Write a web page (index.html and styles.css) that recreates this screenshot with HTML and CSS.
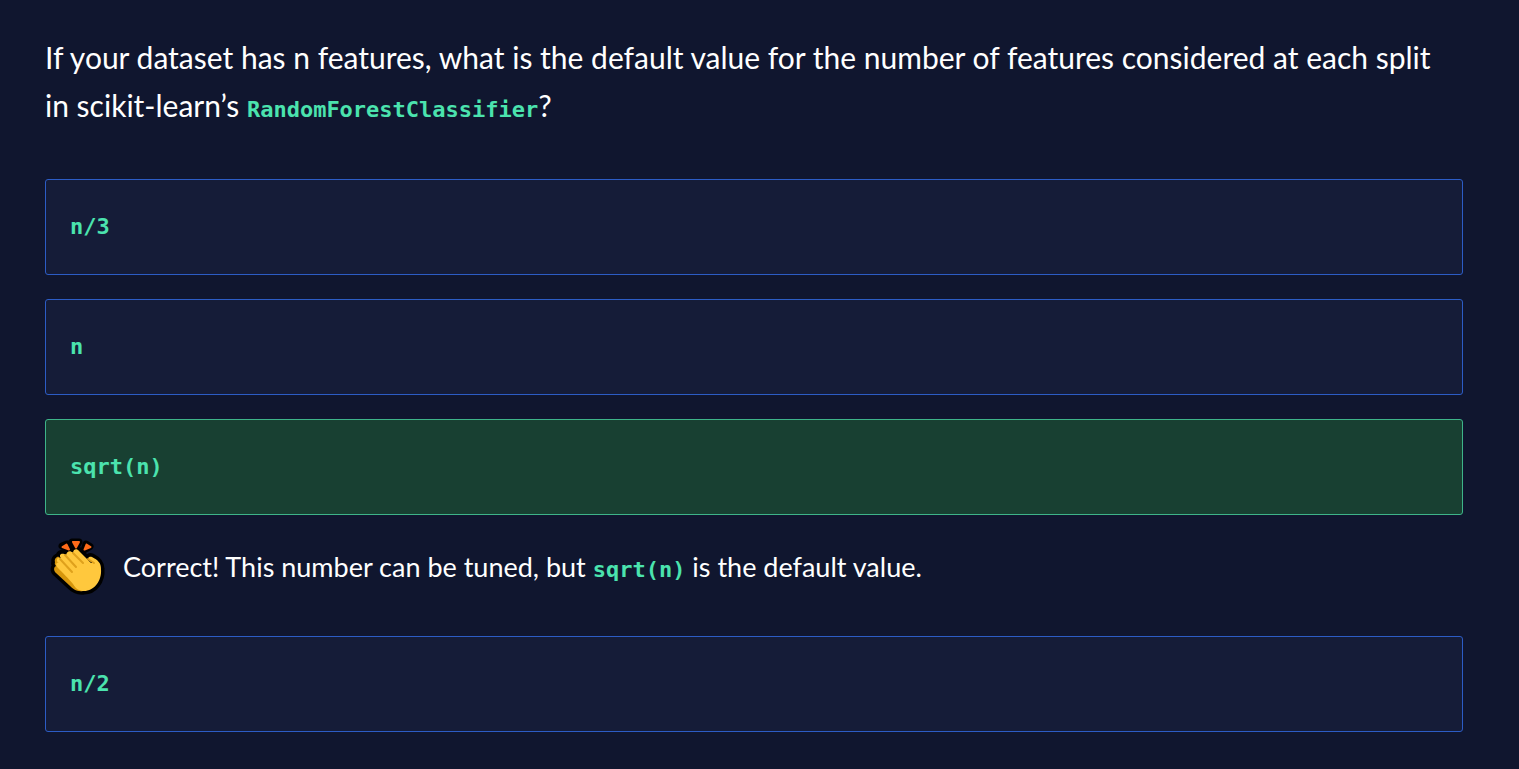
FILE: index.html
```html
<!DOCTYPE html>
<html lang="en">
<head>
<meta charset="utf-8">
<meta name="viewport" content="width=device-width, initial-scale=1">
<title>Random Forest Quiz</title>
<link rel="stylesheet" href="styles.css">
</head>
<body>
<main class="quiz">
  <h1 class="question">If your dataset has n features, what is the default value for the number of features considered at each split in scikit-learn’s <code class="code">RandomForestClassifier</code>?</h1>
  <div class="answers">
    <button class="answer" type="button"><code class="code">n/3</code></button>
    <button class="answer" type="button"><code class="code">n</code></button>
    <button class="answer answer-correct" type="button"><code class="code">sqrt(n)</code></button>
    <div class="feedback">
      <svg class="clap" viewBox="0 0 64 68" aria-hidden="true">
        <g class="clap-outline">
          <path d="M17 14 22 12 24 17ZM27 10H34L31 15ZM41 12 45 14.500 39 18Z"/>
          <path d="M10 30C9 27 12 24 14 25C14 21 18 20 21 23C22 19 25 19 28 20C29 16 33 17 34 19L43 28C42 25 45 24 47 25C53 28 56 31 56 37C57 49 49 59 39 59C32 60 28 57 24 53L11 41C8 38 9 35 11 34Q9 32 10 30Z"/>
        </g>
        <path class="clap-spark" d="M17.500 15 21.500 12.500 24 17.500ZM28 10H34L31 15.500ZM41.500 12.500 45.500 15 39.500 17.500Z"/>
        <path class="clap-back" d="M10 30C9 27 12 24 14 25L38 59C32 60 28 57 24 53L11 41C8 38 9 35 11 34Q9 32 10 30Z"/>
        <path class="clap-hand" d="M12 29C11 26 14 25 16 26C13 23 17 20 21 23C22 19 25 18 28 21C28 17 32 16 34 19L46 31L48 31L44 28C42 25 45 24 47 25C53 28 56 31 56 37C57 49 49 59 39 59C34 59 31 57 28 52C24 47 17 40 13 36C10 33 11 30 14 31Q12 30 12 29Z"/>
        <path class="clap-crease" d="M28 21 38 31M20 23 31 35M15 27 27 40M43 27 49 31"/>
      </svg>
      <p class="feedback-text">Correct! This number can be tuned, but <code class="code">sqrt(n)</code> is the default value.</p>
    </div>
    <button class="answer" type="button"><code class="code">n/2</code></button>
  </div>
</main>
</body>
</html>
```
FILE: styles.css
```css
* { box-sizing: border-box; }

body {
  margin: 0;
  background: #10162f;
  color: #fff;
  font-family: Lato, "Open Sans", sans-serif;
}

.quiz { padding: 33px 56px 37px 45px; }

.question {
  margin: 0 0 50px;
  padding-right: 24px;
  font-size: 30px;
  font-weight: 400;
  line-height: 48px;
}

.code {
  color: #4be3ae;
  font-family: "DejaVu Sans Mono", monospace;
  font-size: 22px;
  font-weight: 700;
  line-height: 1;
}

.answers {
  display: flex;
  flex-direction: column;
  gap: 24px;
}

.answer {
  width: 100%;
  min-height: 96px;
  padding: 24px;
  border: 1px solid #2c5cc5;
  border-radius: 3px;
  background: #151c38;
  color: inherit;
  text-align: left;
  cursor: pointer;
}

.answer-correct {
  border-color: #3eb489;
  background: #184032;
}

.feedback {
  display: flex;
  align-items: flex-start;
  gap: 14px;
  margin-bottom: 14px;
}

.clap {
  flex: none;
  width: 64px;
  height: 68px;
  margin: -7px 0 -2px;
}

.clap-outline {
  fill: #000;
  stroke: #000;
  stroke-width: 7;
  stroke-linejoin: round;
}

.clap-spark {
  fill: #ff6b1a;
  stroke: #ff6b1a;
  stroke-width: 2;
  stroke-linejoin: round;
}

.clap-back { fill: #d6960c; }
.clap-hand { fill: #ffc83d; }

.clap-crease {
  fill: none;
  stroke: #dfa11c;
  stroke-width: 2;
  stroke-linecap: round;
}

.feedback-text {
  margin: 0;
  padding-top: 8px;
  font-size: 27px;
  line-height: 40px;
}
```
